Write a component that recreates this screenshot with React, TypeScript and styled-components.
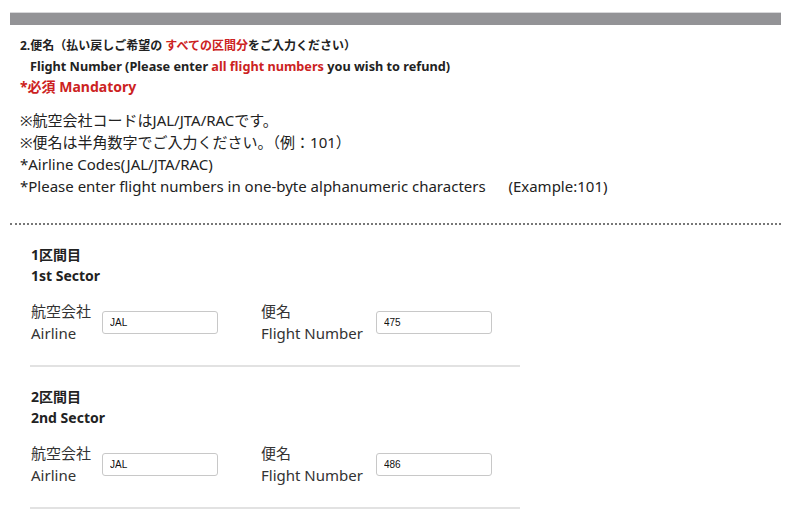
import styled, { createGlobalStyle } from 'styled-components'

const GlobalStyle = createGlobalStyle`
  body {
    margin: 0;
    background: #fff;
    color: #222;
    font-family: "Noto Sans", "Noto Sans CJK JP", sans-serif;
  }
`

const Page = styled.div`
  padding: 12px 19px 0 10px;
`

const TitleBar = styled.div`
  height: 12px;
  background: #939396;
  border-top: 1px solid #d8d8da;
`

const Heading = styled.div`
  padding: 10px 10px 0;
`

const HeadLine = styled.p<{ $indent?: boolean; $size?: number }>`
  margin: 0;
  font-size: ${(p) => p.$size ?? 12}px;
  font-weight: 700;
  line-height: 21px;
  padding-left: ${(p) => (p.$indent ? '10px' : '0')};
`

const Red = styled.span`
  color: #cc2222;
`

const Mandatory = styled.p`
  margin: 0;
  font-size: 14px;
  font-weight: 700;
  line-height: 19px;
  color: #cc2222;
`

const Notes = styled.div`
  margin-top: 13px;
  padding-left: 10px;
  font-size: 15px;
  line-height: 22px;
`

const Note = styled.p`
  margin: 0;
  white-space: pre;
`

const DottedRule = styled.hr`
  margin: 26px 0 0;
  border: 0;
  border-top: 2px dotted #777;
`

const Sector = styled.section`
  width: 490px;
  margin-left: 20px;
  padding-top: 19px;
  padding-bottom: 21px;
  border-bottom: 2px solid #e2e2e2;
`

const SectorTitle = styled.div`
  padding-left: 1px;
  font-size: 14px;
  font-weight: 700;
  line-height: 21px;
`

const FieldRow = styled.div`
  display: flex;
  align-items: center;
  margin-top: 14px;
  padding-left: 1px;
`

const Field = styled.div<{ $gap: number }>`
  display: flex;
  align-items: center;
  margin-right: ${(p) => p.$gap}px;
`

const Label = styled.div<{ $width: number }>`
  width: ${(p) => p.$width}px;
  font-size: 15px;
  line-height: 22px;
  color: #333;
`

const TextInput = styled.input`
  box-sizing: border-box;
  width: 116px;
  height: 23px;
  margin-top: 1px;
  padding: 0 7px;
  border: 1px solid #c8c8c8;
  border-radius: 3px;
  font-family: "Liberation Sans", Arial, sans-serif;
  font-size: 10px;
  color: #111;
  background: #fff;
`

type SectorData = { ja: string; en: string; airline: string; flight: string }

const sectors: SectorData[] = [
  { ja: '1区間目', en: '1st Sector', airline: 'JAL', flight: '475' },
  { ja: '2区間目', en: '2nd Sector', airline: 'JAL', flight: '486' },
]

export default function App() {
  return (
    <>
      <GlobalStyle />
      <Page>
        <TitleBar />
        <Heading>
          <HeadLine>
            2.便名（払い戻しご希望の <Red>すべての区間分</Red>をご入力ください）
          </HeadLine>
          <HeadLine $indent $size={12.7}>
            Flight Number (Please enter <Red>all flight numbers</Red> you wish to refund)
          </HeadLine>
          <Mandatory>*必須 Mandatory</Mandatory>
        </Heading>
        <Notes>
          <Note>※航空会社コードはJAL/JTA/RACです。</Note>
          <Note>※便名は半角数字でご入力ください。（例：101）</Note>
          <Note>*Airline Codes(JAL/JTA/RAC)</Note>
          <Note>*Please enter flight numbers in one-byte alphanumeric characters　  (Example:101)</Note>
        </Notes>
        <DottedRule />
        {sectors.map((s) => (
          <Sector key={s.en}>
            <SectorTitle>
              {s.ja}
              <br />
              {s.en}
            </SectorTitle>
            <FieldRow>
              <Field $gap={43}>
                <Label $width={71}>
                  航空会社
                  <br />
                  Airline
                </Label>
                <TextInput defaultValue={s.airline} />
              </Field>
              <Field $gap={0}>
                <Label $width={115}>
                  便名
                  <br />
                  Flight Number
                </Label>
                <TextInput defaultValue={s.flight} />
              </Field>
            </FieldRow>
          </Sector>
        ))}
      </Page>
    </>
  )
}
